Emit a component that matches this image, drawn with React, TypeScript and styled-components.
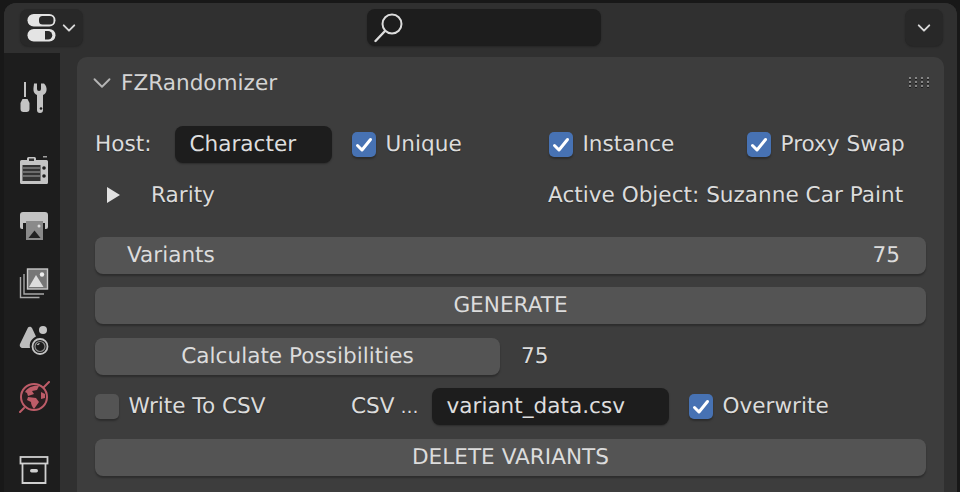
import React from 'react'
import styled, { createGlobalStyle } from 'styled-components'

const Global = createGlobalStyle`
  html, body {
    margin: 0;
    padding: 0;
    background: #181818;
    overflow: hidden;
  }
  * {
    box-sizing: border-box;
  }
`

const Window = styled.div`
  width: 960px;
  height: 492px;
  padding: 3px 3px 0 4px;
  background: #181818;
  overflow: hidden;
  font-family: "DejaVu Sans", sans-serif;
  font-size: 21.6px;
  text-rendering: geometricPrecision;
  color: #d9d9d9;
`

const Region = styled.div`
  height: 100%;
  display: flex;
  flex-direction: column;
  border-radius: 12px 12px 0 0;
  background: #303030;
  overflow: hidden;
`

const Header = styled.header`
  flex: none;
  height: 50px;
  padding: 6px 14px 6px 16px;
  display: flex;
  align-items: flex-start;
  justify-content: space-between;
  background: #303030;
  box-shadow: 0 1px 3px rgba(0, 0, 0, 0.25);
`

const HeaderButton = styled.button`
  height: 37px;
  width: ${p => p.$width}px;
  padding: 0;
  border: 0;
  border-radius: 8px;
  display: flex;
  align-items: center;
  justify-content: center;
  gap: ${p => p.$gap || 0}px;
  background: #282828;
  box-shadow: 0 1px 2px rgba(0, 0, 0, 0.25);
`

const SearchBox = styled.div`
  width: 234px;
  height: 37px;
  margin-right: 21px;
  padding-left: 7px;
  display: flex;
  align-items: center;
  border-radius: 8px;
  background: #1d1d1d;
  box-shadow: 0 1px 2px rgba(0, 0, 0, 0.25);
`

const Body = styled.div`
  flex: 1;
  min-height: 0;
  display: flex;
`

const Tabs = styled.nav`
  flex: none;
  width: 56px;
  padding-left: 4px;
  display: flex;
  flex-direction: column;
  align-items: center;
  background: #1d1d1d;
`

const Tab = styled.div`
  flex: none;
  width: 100%;
  height: ${p => p.$height}px;
  margin-top: ${p => p.$gap || 0}px;
  display: flex;
  align-items: center;
  justify-content: center;
`

const PanelArea = styled.main`
  flex: 1;
  min-width: 0;
  padding: 4px 13px 0 17px;
  background: #303030;
`

const Panel = styled.section`
  height: 460px;
  padding: 0 18px;
  border-radius: 10px 10px 0 0;
  background: #3d3d3d;
`

const PanelHead = styled.div`
  height: 50px;
  display: flex;
  align-items: center;
  justify-content: space-between;
  margin-bottom: 19px;
`

const PanelTitle = styled.div`
  display: flex;
  align-items: center;
  gap: 9px;
  padding-top: 2px;
  color: #d4d4d4;
  margin-left: -3px;
`

const Grip = styled.div`
  display: grid;
  grid-template-columns: repeat(4, 2px);
  gap: 2px 4px;
  margin-right: -3px;
`

const GripDot = styled.span`
  width: 2px;
  height: 2px;
  background: #858585;
  box-shadow: 0 1px 0 #1c1c1c;
`

const Row = styled.div`
  height: 37px;
  margin-bottom: ${p => p.$after ?? 13.5}px;
  display: flex;
  align-items: center;
  white-space: nowrap;
`

const Label = styled.span`
  color: #dcdcdc;
  flex: none;
  width: ${p => (p.$width ? `${p.$width}px` : 'auto')};
  margin-left: ${p => p.$left || 0}px;
  text-shadow: 0 1px 1px rgba(0, 0, 0, 0.3);
`

const Dots = styled.span`
  margin-left: 6px;
  font-size: 18px;
`

const TextField = styled.div`
  flex: none;
  width: ${p => p.$width}px;
  height: 37px;
  padding-left: 14.5px;
  display: flex;
  align-items: center;
  border-radius: 8px;
  color: #dedede;
  background: #1d1d1d;
  box-shadow: 0 1px 2px rgba(0, 0, 0, 0.3);
`

const CheckWrap = styled.label`
  flex: none;
  display: flex;
  align-items: center;
  gap: 9.5px;
  width: ${p => (p.$width ? `${p.$width}px` : 'auto')};
  margin-left: ${p => p.$left || 0}px;
`

const Box = styled.span`
  flex: none;
  width: 24px;
  height: 25px;
  display: flex;
  align-items: center;
  justify-content: center;
  border-radius: 5px;
  background: ${p => (p.$on ? '#4772b3' : '#545454')};
  box-shadow: 0 2px 2px rgba(0, 0, 0, 0.28);
`

const SlimButton = styled.button`
  flex: ${p => (p.$width ? 'none' : 1)};
  width: ${p => (p.$width ? `${p.$width}px` : 'auto')};
  height: 37px;
  padding: 0;
  border: 0;
  border-radius: 8px;
  font: inherit;
  text-rendering: inherit;
  color: #dcdcdc;
  background: #545454;
  box-shadow: 0 2px 2px rgba(0, 0, 0, 0.28);
`

const NumberField = styled(SlimButton)`
  display: flex;
  align-items: center;
  justify-content: space-between;
  padding: 0 26px 0 32px;
`

const Disclosure = styled.span`
  flex: none;
  width: 0;
  height: 0;
  margin-left: 12px;
  border-left: 13px solid #e2e2e2;
  border-top: 8px solid transparent;
  border-bottom: 8px solid transparent;
`

const Chevron = ({ size = 16, color = '#d8d8d8', width = 2.2 }: { size?: number; color?: string; width?: number }) => (
  <svg width={size} height={size} viewBox="0 0 16 16" fill="none">
    <path d="M2 5l6 6 6-6" stroke={color} strokeWidth={width} strokeLinecap="round" strokeLinejoin="round" />
  </svg>
)

const Check = () => (
  <svg width="18" height="18" viewBox="0 0 18 18" fill="none">
    <path d="M2.5 9.5l4.5 4.5 8.5-10.5" stroke="#fff" strokeWidth="3" strokeLinecap="round" strokeLinejoin="round" />
  </svg>
)

const Checkbox = ({ on, children, width, left }: { on?: boolean; children: React.ReactNode; width?: number; left?: number }) => (
  <CheckWrap $width={width} $left={left}>
    <Box $on={on}>{on && <Check />}</Box>
    <Label>{children}</Label>
  </CheckWrap>
)

const EditorIcon = () => (
  <svg width="30" height="30" viewBox="0 0 30 30">
    <rect x="0.5" y="1" width="28" height="12.5" rx="6.2" fill="#e4e4e4" />
    <rect x="12" y="3" width="14.5" height="8.5" rx="3.5" fill="#2a2a2a" />
    <rect x="0.5" y="16" width="28" height="12.5" rx="6.2" fill="#e4e4e4" />
    <path d="M18 18h3a4.2 4.2 0 010 8.500h-3z" fill="#2a2a2a" />
  </svg>
)

const SearchIcon = () => (
  <svg width="30" height="32" viewBox="0 0 30 32" fill="none" stroke="#dcdcdc">
    <circle cx="18" cy="12" r="9.500" strokeWidth="2" />
    <path d="M11 19L1.500 29" strokeWidth="2.400" strokeLinecap="round" />
  </svg>
)

const ToolIcon = () => (
  <svg width="32" height="32" viewBox="0 0 32 32" fill="#c4c4c4">
    <rect x="6" y="1" width="2" height="15" />
    <path d="M4.500 18h5l2 4v6a3 3 0 01-3 3H5.500a3 3 0 01-3-3v-6z" />
    <path d="M16 2.500l3 0v5.500a2 2 0 004 0V2.500h3c2 2 3 4.500 2.500 7-.4 2-1.500 3.500-3.500 4.500v15a2.500 2.500 0 01-6 0V14c-2-1-3.200-2.500-3.500-4.500-.3-2.500.500-5 .5-7z" />
    <circle cx="23" cy="27.500" r="1.300" fill="#1d1d1d" />
  </svg>
)

const RenderIcon = () => (
  <svg width="32" height="32" viewBox="0 0 32 32" fill="none">
    <path d="M3.500 6H9V4.500A1.500 1.500 0 0110.500 3h6A1.500 1.500 0 0118 4.500V6h10.500A1.500 1.500 0 0130 7.500v21a1.500 1.500 0 01-1.500 1.500h-25A1.500 1.500 0 012 28.500v-21A1.500 1.500 0 013.500 6z" fill="#c4c4c4" />
    <rect x="4.500" y="11" width="18" height="16" fill="#333" />
    <path d="M5 14h17M5 18h17M5 22h17" stroke="#808080" strokeWidth="1.500" />
    <circle cx="26" cy="14" r="1.800" fill="#1d1d1d" />
    <circle cx="26" cy="22" r="1.800" fill="#1d1d1d" />
    <rect x="11" y="4.500" width="5" height="2.500" fill="#333" />
    <rect x="25" y="2" width="4" height="1.500" fill="#a0a0a0" />
  </svg>
)

const OutputIcon = () => (
  <svg width="32" height="32" viewBox="0 0 32 32">
    <path d="M2 4a3 3 0 013-3h22a3 3 0 013 3v12a2 2 0 01-2 2h-1v-6H5v6H4a2 2 0 01-2-2z" fill="#c4c4c4" />
    <rect x="8" y="10" width="17" height="19" fill="#8a8a8a" />
    <path d="M10.500 27l6-7.500 6 7.500z" fill="#222" />
    <circle cx="21" cy="15" r="1.500" fill="#ddd" />
  </svg>
)

const ViewLayerIcon = () => (
  <svg width="32" height="32" viewBox="0 0 32 32" fill="none">
    <path d="M2.500 10v20.500h19" stroke="#a8a8a8" strokeWidth="1.400" />
    <path d="M6 7v20h20" stroke="#a8a8a8" strokeWidth="1.400" />
    <rect x="9.500" y="2" width="20" height="20" fill="#777" stroke="#c8c8c8" strokeWidth="1.400" />
    <path d="M11 20l7-12 7.500 12z" fill="#dedede" />
    <circle cx="24" cy="7.500" r="2.200" fill="#eee" />
  </svg>
)

const SceneIcon = () => (
  <svg width="32" height="32" viewBox="0 0 32 32" fill="none">
    <path d="M10 3.500L2 20c-.8 2 .4 4 3 4h7c-1-5 1-9 6-11.500L14 4c-1-1.500-3-1.500-4-.5z" fill="#bdbdbd" />
    <circle cx="25" cy="6" r="4" fill="#c4c4c4" />
    <circle cx="22" cy="22.500" r="7.500" stroke="#c4c4c4" strokeWidth="1.800" />
    <circle cx="22" cy="22.500" r="5" stroke="#8a8a8a" strokeWidth="1.200" />
    <path d="M19.500 21a3 3 0 012-1.500" stroke="#ddd" strokeWidth="1.200" />
  </svg>
)

const WorldIcon = () => (
  <svg width="32" height="32" viewBox="0 0 32 32" fill="none">
    <circle cx="16" cy="16" r="13" stroke="#bd5c68" strokeWidth="2" fill="#2a1e20" />
    <path d="M7 11c3-5 9-7 14-6l-2 4-5 1 2 3-6 2-1-3zM10 16l8 1 3 4-5 7c-2-2-3-5-3-7l-4-2zM23 11l4 2v4l-4 1z" fill="#bd5c68" />
    <path d="M2 31l4-4M26 6l5-5" stroke="#bd5c68" strokeWidth="2" strokeLinecap="round" />
  </svg>
)

const CollectionIcon = () => (
  <svg width="32" height="32" viewBox="0 0 32 32" fill="none" stroke="#d0d0d0" strokeWidth="1.800">
    <rect x="2.500" y="3" width="27" height="6.500" />
    <path d="M4.500 10v19h23V10" />
    <rect x="12" y="15" width="8" height="3.500" rx="1.700" fill="#d0d0d0" stroke="none" />
  </svg>
)

const gripDots = Array.from({ length: 12 })

export default function App() {
  return (
    <Window>
      <Global />
      <Region>
        <Header>
          <HeaderButton $width={63} $gap={5}>
            <EditorIcon />
            <Chevron size={14} />
          </HeaderButton>
          <SearchBox>
            <SearchIcon />
          </SearchBox>
          <HeaderButton $width={38}>
            <Chevron size={14} />
          </HeaderButton>
        </Header>
        <Body>
          <Tabs>
            <Tab $height={88}><ToolIcon /></Tab>
            <Tab $height={57}><RenderIcon /></Tab>
            <Tab $height={57}><OutputIcon /></Tab>
            <Tab $height={56}><ViewLayerIcon /></Tab>
            <Tab $height={57}><SceneIcon /></Tab>
            <Tab $height={57}><WorldIcon /></Tab>
            <Tab $height={57} $gap={16}><CollectionIcon /></Tab>
          </Tabs>
          <PanelArea>
            <Panel>
              <PanelHead>
                <PanelTitle>
                  <Chevron size={20} color="#b4b4b4" width={1.500} />
                  FZRandomizer
                </PanelTitle>
                <Grip>
                  {gripDots.map((_, i) => <GripDot key={i} />)}
                </Grip>
              </PanelHead>

              <Row>
                <Label $width={80}>Host:</Label>
                <TextField $width={157}>Character</TextField>
                <Checkbox on left={20} width={197}>Unique</Checkbox>
                <Checkbox on width={198}>Instance</Checkbox>
                <Checkbox on>Proxy Swap</Checkbox>
              </Row>
              <Row $after={23}>
                <Disclosure />
                <Label $left={31} $width={397}>Rarity</Label>
                <Label>Active Object: Suzanne Car Paint</Label>
              </Row>
              <Row>
                <NumberField>
                  <span>Variants</span>
                  <span>75</span>
                </NumberField>
              </Row>
              <Row>
                <SlimButton>GENERATE</SlimButton>
              </Row>
              <Row>
                <SlimButton $width={405}>Calculate Possibilities</SlimButton>
                <Label $left={21}>75</Label>
              </Row>
              <Row>
                <Checkbox width={256}>Write To CSV</Checkbox>
                <Label $width={81}>CSV<Dots>…</Dots></Label>
                <TextField $width={237}>variant_data.csv</TextField>
                <Checkbox on left={20}>Overwrite</Checkbox>
              </Row>
              <Row>
                <SlimButton>DELETE VARIANTS</SlimButton>
              </Row>
            </Panel>
          </PanelArea>
        </Body>
      </Region>
    </Window>
  )
}
